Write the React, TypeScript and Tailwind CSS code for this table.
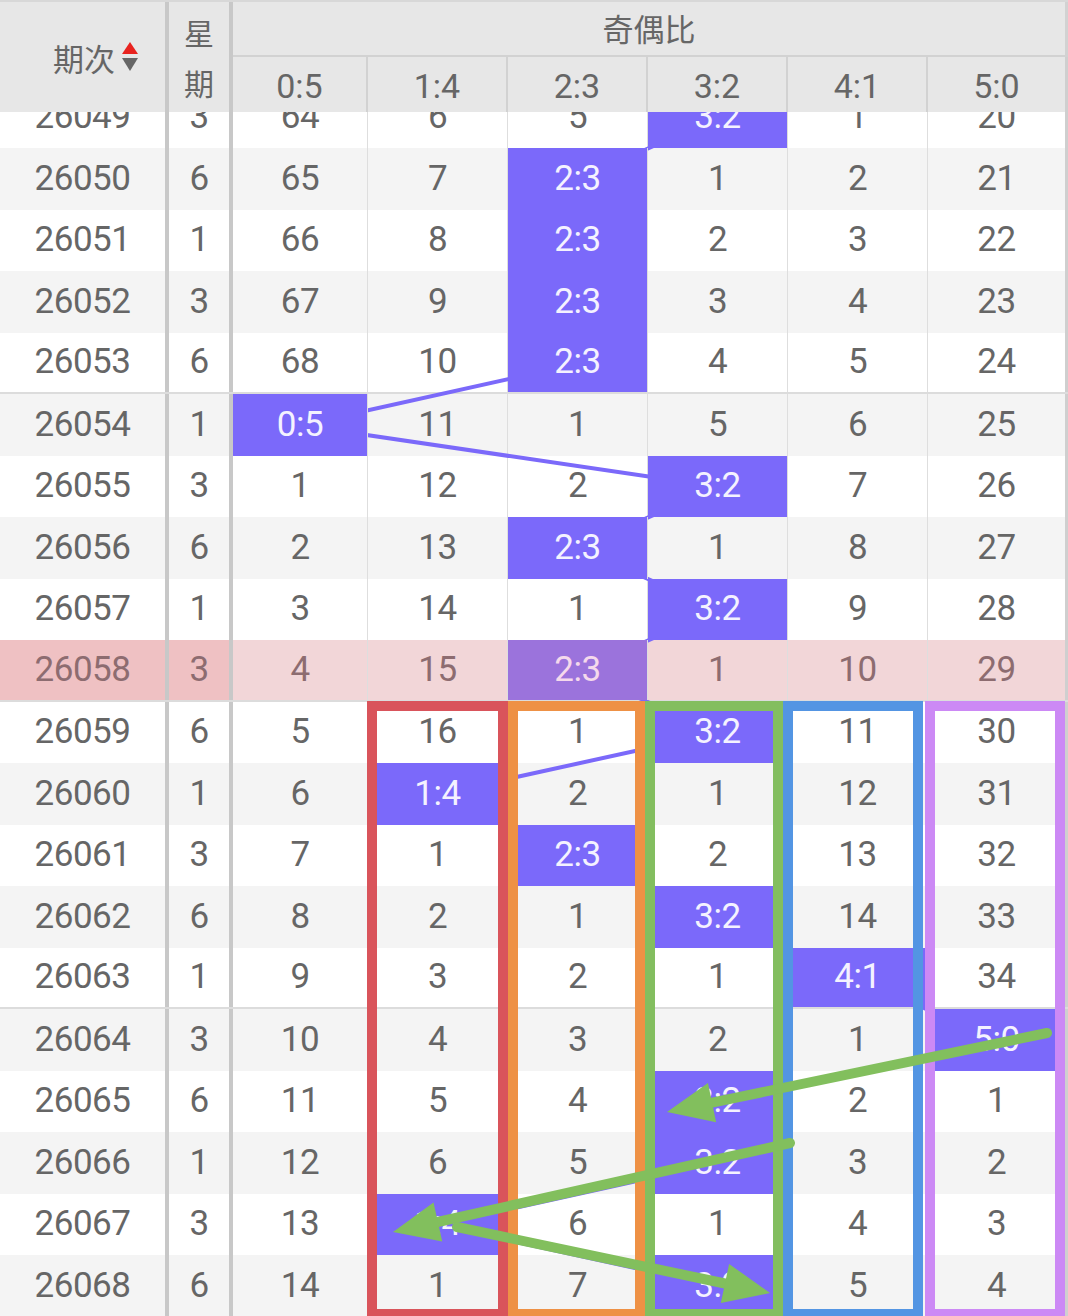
import React from 'react';

const RATIOS = ['0:5', '1:4', '2:3', '3:2', '4:1', '5:0'];

// -1 marks the hit cell (drawn purple with the ratio label)
const ROWS: { p: string; w: number; v: number[] }[] = [
  { p: '26049', w: 3, v: [64, 6, 5, -1, 1, 20] },
  { p: '26050', w: 6, v: [65, 7, -1, 1, 2, 21] },
  { p: '26051', w: 1, v: [66, 8, -1, 2, 3, 22] },
  { p: '26052', w: 3, v: [67, 9, -1, 3, 4, 23] },
  { p: '26053', w: 6, v: [68, 10, -1, 4, 5, 24] },
  { p: '26054', w: 1, v: [-1, 11, 1, 5, 6, 25] },
  { p: '26055', w: 3, v: [1, 12, 2, -1, 7, 26] },
  { p: '26056', w: 6, v: [2, 13, -1, 1, 8, 27] },
  { p: '26057', w: 1, v: [3, 14, 1, -1, 9, 28] },
  { p: '26058', w: 3, v: [4, 15, -1, 1, 10, 29] },
  { p: '26059', w: 6, v: [5, 16, 1, -1, 11, 30] },
  { p: '26060', w: 1, v: [6, -1, 2, 1, 12, 31] },
  { p: '26061', w: 3, v: [7, 1, -1, 2, 13, 32] },
  { p: '26062', w: 6, v: [8, 2, 1, -1, 14, 33] },
  { p: '26063', w: 1, v: [9, 3, 2, 1, -1, 34] },
  { p: '26064', w: 3, v: [10, 4, 3, 2, 1, -1] },
  { p: '26065', w: 6, v: [11, 5, 4, -1, 2, 1] },
  { p: '26066', w: 1, v: [12, 6, 5, -1, 3, 2] },
  { p: '26067', w: 3, v: [13, -1, 6, 1, 4, 3] },
  { p: '26068', w: 6, v: [14, 1, 7, -1, 5, 4] },
];

const HIGHLIGHT = '26058';
const ROW_H = 61.5;
const COL_X = [300.5, 438, 578, 718, 858, 996.5];

const dataCol = [
  'w-[135px] border-r border-[#dedede]',
  'w-[140px] border-r border-[#dedede]',
  'w-[140px] border-r border-[#dedede]',
  'w-[140px] border-r border-[#dedede]',
  'w-[140px] border-r border-[#dedede]',
  'w-[140px] border-r-[3px] border-[#cfcfcf]',
];

const headCol = [
  'w-[135px] border-r-2 border-[#d2d2d2]',
  'w-[140px] border-r-2 border-[#d2d2d2]',
  'w-[140px] border-r-2 border-[#d2d2d2]',
  'w-[140px] border-r-2 border-[#d2d2d2]',
  'w-[140px] border-r-2 border-[#d2d2d2]',
  'w-[140px] border-r-[3px] border-[#cfcfcf]',
];

function SortIcon() {
  return (
    <svg width="18" height="34" viewBox="0 0 18 34" className="ml-[6px]">
      <polygon points="9,1 17,13 1,13" fill="#e8231f" />
      <polygon points="1,17 17,17 9,30" fill="#666666" />
    </svg>
  );
}

function arrow(x1: number, y1: number, x2: number, y2: number) {
  const dx = x2 - x1;
  const dy = y2 - y1;
  const len = Math.hypot(dx, dy);
  const ux = dx / len;
  const uy = dy / len;
  const L = 46;
  const H = 20;
  const bx = x2 - ux * L;
  const by = y2 - uy * L;
  const head = `${x2},${y2} ${bx - uy * H},${by + ux * H} ${bx + uy * H},${by - ux * H}`;
  return { line: { x1, y1, x2: x2 - ux * (L - 6), y2: y2 - uy * (L - 6) }, head };
}

const ARROWS = [
  arrow(1047, 1033, 667, 1112),
  arrow(790, 1143, 393, 1232),
  arrow(457, 1227, 770, 1293),
];

export default function App() {
  const pts = ROWS.map((r, i) => {
    const idx = r.v.indexOf(-1);
    return `${COL_X[idx]},${ROW_H / 2 + i * ROW_H}`;
  }).join(' ');

  return (
    <div
      className="relative w-[1068px] h-[1316px] overflow-hidden bg-white text-[#666666] flex flex-col"
      style={{ fontFamily: 'Roboto, "Noto Sans CJK SC", sans-serif' }}
    >
      {/* header */}
      <div className="flex h-[112px] shrink-0 bg-[#e7e7e7] border-t-2 border-[#d8d8d8]">
        <div className="w-[169px] border-r-4 border-[#c8c8c8] flex items-center justify-end pr-[26px] text-[31px] pt-[2px]">
          <span className="font-['Noto_Sans_CJK_SC']">期次</span>
          <SortIcon />
        </div>
        <div className="w-[64px] border-r-4 border-[#c8c8c8] flex flex-col items-center justify-center text-[30px] leading-[50px] font-['Noto_Sans_CJK_SC']">
          <span>星</span>
          <span>期</span>
        </div>
        <div className="flex-1 flex flex-col">
          <div className="h-[55px] border-b-2 border-r-[3px] border-[#d2d2d2] flex items-center justify-center text-[31px] font-['Noto_Sans_CJK_SC']">
            奇偶比
          </div>
          <div className="flex flex-1">
            {RATIOS.map((r, i) => (
              <div key={r} className={`${headCol[i]} flex items-center justify-center text-[34px] pt-[3px]`}>
                {r}
              </div>
            ))}
          </div>
        </div>
      </div>

      {/* body */}
      <div className="relative flex-1 overflow-hidden">
        <div className="relative -mt-[25.5px]">
          <svg className="absolute left-0 top-0 z-[5] overflow-visible" width="1068" height="1240">
            <polyline points={pts} fill="none" stroke="#7b69fa" strokeWidth="4" />
          </svg>
          {ROWS.map((r, i) => {
            const hl = r.p === HIGHLIGHT;
            const odd = i % 2 === 1;
            const groupEnd = r.p === '26053' || r.p === '26058' || r.p === '26063';
            const rowBg = hl ? 'bg-[#f2d6d8]' : odd ? 'bg-[#f4f4f4]' : 'bg-white';
            return (
              <div
                key={r.p}
                className={`flex h-[61.5px] text-[35px] tracking-[-0.5px] ${rowBg} ${groupEnd ? 'border-b-2 border-[#dcdcdc]' : ''} ${hl ? 'text-[#8d6c70]' : ''}`}
              >
                <div className={`w-[169px] border-r-4 border-[#c8c8c8] flex items-center justify-center ${hl ? 'bg-[#efc1c3]' : ''}`}>
                  {r.p}
                </div>
                <div className={`w-[64px] border-r-4 border-[#c8c8c8] flex items-center justify-center ${hl ? 'bg-[#efc1c3]' : ''}`}>
                  {r.w}
                </div>
                {r.v.map((v, j) =>
                  v === -1 ? (
                    <div
                      key={j}
                      className={`${dataCol[j]} relative z-10 flex items-center justify-center ${hl ? 'bg-[#9b73dc] text-[#f5d9ec]' : 'bg-[#7b69fa] text-[#f4f2ff]'}`}
                    >
                      {RATIOS[j]}
                    </div>
                  ) : (
                    <div key={j} className={`${dataCol[j]} flex items-center justify-center`}>
                      {v}
                    </div>
                  )
                )}
              </div>
            );
          })}
        </div>
      </div>

      {/* column boxes drawn over the last rows */}
      <div className="absolute z-20 left-[367px] top-[701px] w-[141px] h-[618px] border-[10px] border-[#d9545b]" />
      <div className="absolute z-20 left-[508px] top-[701px] w-[137px] h-[618px] border-[10px] border-[#ee9145]" />
      <div className="absolute z-20 left-[645px] top-[701px] w-[138px] h-[618px] border-[10px] border-[#83be5f]" />
      <div className="absolute z-20 left-[783px] top-[701px] w-[140px] h-[618px] border-[10px] border-[#5395e3]" />
      <div className="absolute z-20 left-[925px] top-[701px] w-[140px] h-[618px] border-[10px] border-[#cc89f5]" />

      {/* green arrows */}
      <svg className="absolute left-0 top-0 z-30 pointer-events-none" width="1068" height="1316">
        {ARROWS.map((a, i) => (
          <g key={i}>
            <line {...a.line} stroke="#82bf5d" strokeWidth="10" strokeLinecap="round" />
            <polygon points={a.head} fill="#82bf5d" />
          </g>
        ))}
      </svg>
    </div>
  );
}
